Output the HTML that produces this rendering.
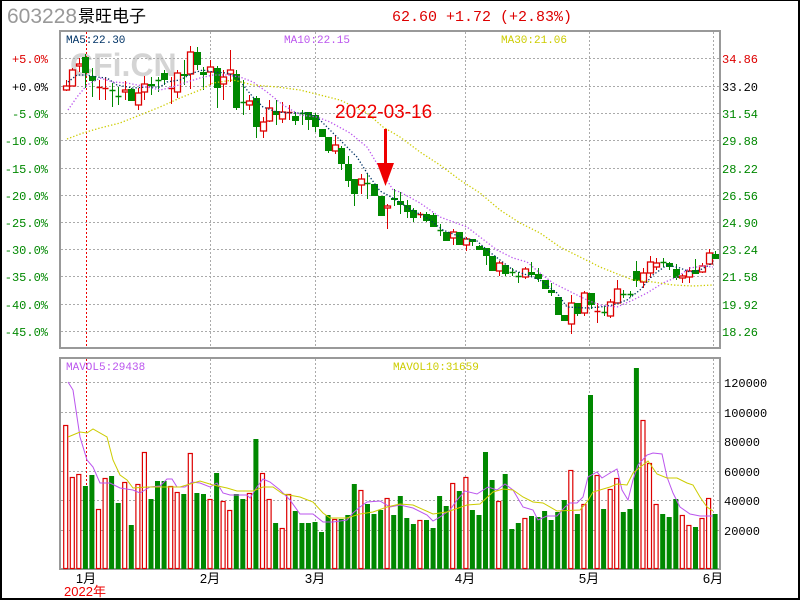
<!DOCTYPE html>
<html><head><meta charset="utf-8"><style>
html,body{margin:0;padding:0;background:#fff}
#w{position:relative;width:800px;height:600px;overflow:hidden}
svg text{font-family:"Liberation Mono","WenQuanYi Zen Hei",monospace}
</style></head><body><div id="w">
<svg id="s" width="800" height="600" xmlns="http://www.w3.org/2000/svg">
<rect x="0.5" y="0.5" width="799" height="599" fill="#fff" stroke="#000" stroke-width="1"/>
<rect x="0" y="0" width="800" height="1" fill="#000"/>
<rect x="0" y="0" width="2" height="600" fill="#000"/>
<rect x="798" y="0" width="2" height="600" fill="#000"/>
<rect x="0" y="598" width="800" height="2" fill="#000"/>
<text x="7" y="23" font-size="21" fill="#999" style="font-family:'Liberation Sans',sans-serif">603228</text>
<text x="78" y="22" font-size="17" fill="#000" style="font-family:'WenQuanYi Zen Hei','Noto Sans CJK SC',sans-serif">景旺电子</text>
<text x="392" y="21" font-size="15" fill="#d00">62.60 +1.72 (+2.83%)</text>
<text x="70" y="76" font-size="32" font-weight="bold" fill="#d4d4d4" style="font-family:'Liberation Sans',sans-serif">CFi.CN</text>
<g id="g"></g>
</svg>
<script>
var g=document.getElementById('g'),h='';
function L(x1,y1,x2,y2,c,extra){h+='<line x1="'+x1+'" y1="'+y1+'" x2="'+x2+'" y2="'+y2+'" stroke="'+c+'" '+(extra||'')+'/>';}
function T(x,y,t,c,s,a){h+='<text x="'+x+'" y="'+y+'" font-size="'+(s||12)+'" fill="'+c+'"'+(a?' text-anchor="'+a+'"':'')+'>'+t+'</text>';}
var dot='stroke-width="1" stroke-dasharray="2,2"';
var py=[58,86,113,140,168,195,222,249,276,304,331];
py.forEach(function(y){L(61,y+.5,719,y+.5,'#aaa',dot);});
var vx=[210,315,465,589,713];
vx.forEach(function(x){L(x+.5,32,x+.5,348,'#aaa',dot);L(x+.5,359,x+.5,568,'#aaa',dot);});
var vy=[382,412,441,471,500,530];
vy.forEach(function(y){L(61,y+.5,719,y+.5,'#aaa',dot);});
L(86.5,32,86.5,348,'#e00','stroke-dasharray="2,2"');L(86.5,359,86.5,569,'#e00','stroke-dasharray="2,2"');
h+='<rect x="60" y="31" width="660" height="317" fill="none" stroke="#999" stroke-width="2"/>';
h+='<rect x="60" y="358" width="660" height="211" fill="none" stroke="#999" stroke-width="2"/>';
var pl=['+5.0%','+0.0%','-5.0%','-10.0%','-15.0%','-20.0%','-25.0%','-30.0%','-35.0%','-40.0%','-45.0%'];
var pr=['34.86','33.20','31.54','29.88','28.22','26.56','24.90','23.24','21.58','19.92','18.26'];
pl.forEach(function(t,i){var c=i==0?'#d00':(i==1?'#000':'#080');T(48,py[i]+5,t,c,12,'end');T(722,py[i]+5,pr[i],c,12);});
['120000','100000','80000','60000','40000','20000'].forEach(function(t,i){T(724,vy[i]+5,t,'#000',12);});
T(66,43,'MA5:22.30','#036',11);T(284,43,'MA10:22.15','#b5e',11);T(501,43,'MA30:21.06','#cc0',11);
T(66,370,'MAVOL5:29438','#b5e',11);T(393,370,'MAVOL10:31659','#cc0',11);
[['1月',86],['2月',210],['3月',315],['4月',465],['5月',589],['6月',713]].forEach(function(m){h+='<text x="'+m[1]+'" y="583" font-size="13" text-anchor="middle" fill="#000" style="font-family:\'WenQuanYi Zen Hei\',sans-serif">'+m[0]+'</text>';});
h+='<text x="85" y="596" font-size="13" text-anchor="middle" fill="#e00" style="font-family:\'WenQuanYi Zen Hei\',sans-serif">2022年</text>';
var V='r425 r477 r474 g486 g475 r509 r478 g476 g503 r482 g525 r484 r452 g499 g481 g481 r486 r492 g494 r453 g493 g494 r499 g473 r501 r510 g494 g499 r493 g439 r473 r499 g523 r528 r494 g511 g523 g523 g522 g532 g515 r519 g519 g515 g484 r490 g504 g514 g510 r498 g515 g496 g518 g524 r520 g520 g528 g496 g506 r483 g491 r477 g510 g515 g452 g480 r501 g474 g529 g523 r518 g516 g517 g511 g520 g512 g500 r470 g514 r504 g395 r475 g509 r489 r478 g512 g509 g368 r420 r463 r504 g514 g517 g499 r515 r525 g527 r518 r498 g514'.split(' ');
function X(i){return 65.7+i*6.56;}
V.forEach(function(v,i){var x=X(i),y=+v.slice(1);if(v[0]=='g')h+='<rect x="'+(x-2.5).toFixed(1)+'" y="'+y+'" width="5" height="'+(569-y)+'" fill="#080"/>';else h+='<rect x="'+(x-2).toFixed(1)+'" y="'+(y+.5)+'" width="4" height="'+(568-y)+'" fill="#fff" stroke="#d00" stroke-width="1.2"/>';});
function P(pts,c,extra){h+='<polyline fill="none" stroke="'+c+'" '+(extra||'stroke-width="1"')+' points="'+pts+'"/>';}
P('68,382 73,390 77,417 80,437 87,460 93,467 100,483 110,483 120,488 133,490 140,493 150,487 160,486 167,479 172,479 177,487 185,487 192,482 200,483 210,487 217,483 223,493 230,495 247,495 250,498 257,487 263,479 270,482 280,490 290,500 300,514 313,514 323,522 333,522 347,520 353,513 360,507 367,502 380,501 390,507 400,505 413,508 427,515 433,521 440,517 450,510 457,500 465,491 477,494 488,487 497,490 505,484 513,490 523,507 533,510 538,520 547,516 557,516 565,507 570,503 577,503 583,497 588,477 597,472 602,478 610,473 617,469 622,490 628,500 633,480 638,465 647,455 653,453 662,454 667,477 673,493 680,507 690,514 700,516 713,516','#b5e');
P('68,437 80,432 87,433 93,429 107,437 113,460 120,475 127,480 133,488 147,487 167,487 180,487 200,481 213,485 227,488 237,491 253,491 263,487 273,487 283,494 300,497 313,502 323,513 330,518 347,518 360,514 373,512 387,507 400,504 413,505 433,514 447,512 467,505 480,504 493,492 503,489 513,490 523,497 533,502 543,503 557,511 580,510 587,502 593,492 610,487 617,484 627,485 633,473 648,461 657,474 667,478 677,478 687,483 693,485 700,497 707,507 713,511','#cc0');
var C=[['r',86,90,80,91],['r',70,86,68,86],['r',64,66,58,72],['g',57,73,54,88],['g',76,81,68,97],['r',87,88,80,100],['r',88,88,77,100],['g',90,91,83,107],['g',96,96,87,105],['r',90,92,81,100],['g',89,101,88,101],['r',93,105,88,110],['r',84,92,76,100],['g',84,86,77,95],['g',80,81,77,92],['g',73,80,70,85],['r',88,89,77,104],['r',73,92,70,98],['g',74,76,60,85],['r',52,74,46,89],['g',52,65,47,70],['g',72,75,67,90],['r',67,72,60,85],['g',68,88,66,108],['r',77,84,70,100],['r',70,74,50,82],['g',74,108,70,110],['g',102,103,80,115],['r',101,105,95,110],['g',98,127,96,138],['r',122,131,117,138],['r',108,121,100,122],['g',111,115,100,125],['r',112,119,102,123],['r',112,113,105,120],['g',116,121,112,125],['g',113,114,110,125],['g',112,120,112,130],['g',115,127,113,132],['g',129,137,129,137],['g',137,151,137,153],['r',145,151,135,154],['g',148,164,146,170],['g',164,181,156,187],['g',179,194,179,206],['r',179,185,174,194],['g',183,184,173,199],['g',184,196,184,196],['g',196,216,196,216],['r',206,208,204,229],['g',198,200,189,206],['g',201,205,192,214],['g',205,212,200,218],['g',210,218,208,222],['r',214,215,212,218],['g',214,221,212,222],['g',215,227,213,227],['g',230,230,224,236],['g',232,241,232,241],['r',232,238,229,245],['g',232,245,232,245],['r',239,245,237,251],['g',239,242,239,246],['g',246,250,245,250],['g',248,256,248,265],['g',256,271,256,271],['r',263,271,261,276],['g',265,274,265,276],['g',272,272,268,276],['g',276,276,272,283],['r',269,277,267,279],['g',272,275,262,277],['g',274,279,268,282],['g',280,289,280,289],['g',290,293,283,296],['g',297,315,297,315],['g',315,321,315,321],['r',303,324,295,334],['g',303,314,303,316],['r',293,313,291,316],['g',293,305,293,309],['r',311,311,303,323],['g',312,312,306,316],['r',302,316,299,318],['r',289,303,280,303],['g',294,294,290,298],['g',294,294,291,297],['g',271,281,261,287],['r',273,282,268,288],['r',262,273,256,278],['r',263,267,258,270],['g',262,263,258,267],['g',263,267,262,270],['g',269,278,264,280],['r',276,278,274,283],['r',271,277,267,283],['g',270,274,259,274],['r',266,272,263,273],['r',253,264,249,265],['g',254,259,251,259]];
C.forEach(function(c,i){var x=X(i),xc=(Math.round(x)+.5),col=c[0]=='g'?'#080':'#d00';L(xc,c[3],xc,c[4],col);var bh=c[2]-c[1];if(bh<1.5){L(xc-3,c[1]+.5,xc+3,c[1]+.5,col,'stroke-width="1.5"');}else if(c[0]=='g')h+='<rect x="'+(xc-3.5)+'" y="'+c[1]+'" width="7" height="'+bh+'" fill="#080"/>';else h+='<rect x="'+(xc-3)+'" y="'+c[1]+'" width="6" height="'+bh+'" fill="#fff" stroke="#d00" stroke-width="1.3"/>';});
var D='stroke-width="1.3" stroke-dasharray="1.3,2"';
P('68,82 77,75 87,75 97,77 107,78 117,85 133,88 147,87 160,87 167,82 180,80 193,73 203,70 213,72 227,73 237,77 247,90 253,97 263,107 277,112 290,113 307,113 317,117 327,127 337,137 347,147 357,157 367,173 380,191 393,198 410,209 427,218 443,230 463,238 477,241 487,250 500,260 513,270 527,275 540,280 557,293 567,307 587,308 600,307 613,305 627,300 640,290 653,275 667,265 680,268 690,272 700,270 713,263','#036',D);
P('68,110 77,97 87,85 100,78 113,82 127,83 143,86 160,90 173,87 187,82 200,78 213,75 227,75 240,77 253,82 267,92 283,105 300,115 317,117 330,122 350,133 367,147 393,190 400,192 420,203 440,217 467,227 480,237 497,250 513,258 527,262 540,273 553,283 567,290 587,300 600,305 617,307 633,300 647,293 663,283 677,277 690,268 703,266 713,267','#b5e',D);
P('67,139 83,133 100,128 120,123 140,115 160,107 180,98 200,90 213,83 233,80 253,85 277,87 300,90 320,95 340,100 367,113 383,127 400,137 420,152 440,165 460,180 480,193 500,210 520,223 540,233 560,247 580,257 600,267 620,275 633,280 653,282 673,285 693,286 713,285','#cc0',D);
h+='<text x="335" y="118" font-size="19" fill="#e00" style="font-family:\'Liberation Sans\',sans-serif">2022-03-16</text>';
h+='<rect x="384" y="129" width="3" height="36" fill="#e00"/><polygon points="377,163 394,163 385.5,186" fill="#e00"/>';
g.innerHTML=h;
</script>
</div></body></html>
